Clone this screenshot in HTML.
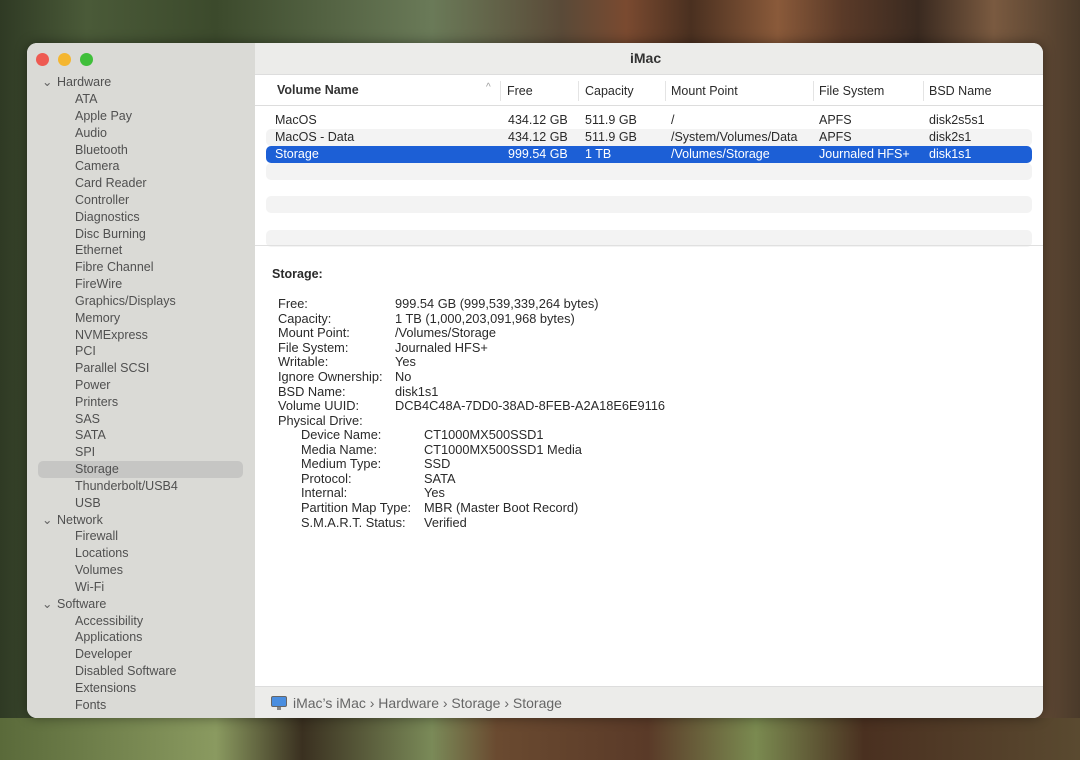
<!DOCTYPE html>
<html><head><meta charset="utf-8"><style>
*{margin:0;padding:0;box-sizing:border-box}
body{width:1080px;height:760px;overflow:hidden;position:relative;font-family:"Liberation Sans",sans-serif;font-size:12.5px;color:#2a2a2a;
background:linear-gradient(90deg,#2f3a24 0%,#4a5a38 8%,#3c4a2c 20%,#6a7a58 40%,#5a4a38 52%,#7a4a30 58%,#4a3020 64%,#8a5a3a 72%,#5a3a28 78%,#3a2a20 85%,#7a5a40 92%,#4a3a2a 100%)}
.t{position:absolute;white-space:nowrap}
#win{position:absolute;left:27px;top:43px;width:1016px;height:675px;border-radius:10px;overflow:hidden;background:#fff;box-shadow:0 0 12px rgba(0,0,0,.4)}
#side{position:absolute;left:0;top:0;width:228px;height:675px;background:#dadad6}
#title{position:absolute;left:228px;top:0;right:0;height:32px;background:#ececea;border-bottom:1px solid #ddd}
#hdr{position:absolute;left:228px;top:32px;right:0;height:31px;background:#fff;border-bottom:1px solid #ddd}
#status{position:absolute;left:228px;top:643px;right:0;height:32px;background:#ececea;border-top:1px solid #ddd}
.dot{position:absolute;top:10px;width:13px;height:13px;border-radius:50%}
.si{position:absolute;left:48px;color:#505050}
.sh{position:absolute;left:30px;color:#505050}
.stripe{position:absolute;left:239px;width:766px;height:17px;background:#f3f3f3;border-radius:5px}
.det{font-size:12.8px}
</style></head><body>
<div style="position:absolute;left:0;top:718px;width:1080px;height:42px;background:linear-gradient(90deg,#5a6a3a,#8a9a60 20%,#3a3020 28%,#7a8a58 40%,#6a4a30 46%,#5a3a28 60%,#7a8a50 70%,#4a3020 80%,#5a4a30)"></div>
<div id="win">
<div id="side">
<div class="dot" style="left:9px;background:#ee5a52"></div>
<div class="dot" style="left:31px;background:#f4b630"></div>
<div class="dot" style="left:53px;background:#3fbf3a"></div>
<div style="position:absolute;left:11px;top:418px;width:205px;height:17px;background:#c6c6c4;border-radius:5px"></div>
<div class="sh" style="top:32px">Hardware</div><div class="t" style="left:15px;top:31px;color:#666">⌄</div>
<div class="si" style="top:49px">ATA</div>
<div class="si" style="top:66px">Apple Pay</div>
<div class="si" style="top:83px">Audio</div>
<div class="si" style="top:100px">Bluetooth</div>
<div class="si" style="top:116px">Camera</div>
<div class="si" style="top:133px">Card Reader</div>
<div class="si" style="top:150px">Controller</div>
<div class="si" style="top:167px">Diagnostics</div>
<div class="si" style="top:184px">Disc Burning</div>
<div class="si" style="top:200px">Ethernet</div>
<div class="si" style="top:217px">Fibre Channel</div>
<div class="si" style="top:234px">FireWire</div>
<div class="si" style="top:251px">Graphics/Displays</div>
<div class="si" style="top:268px">Memory</div>
<div class="si" style="top:285px">NVMExpress</div>
<div class="si" style="top:301px">PCI</div>
<div class="si" style="top:318px">Parallel SCSI</div>
<div class="si" style="top:335px">Power</div>
<div class="si" style="top:352px">Printers</div>
<div class="si" style="top:369px">SAS</div>
<div class="si" style="top:385px">SATA</div>
<div class="si" style="top:402px">SPI</div>
<div class="si" style="top:419px">Storage</div>
<div class="si" style="top:436px">Thunderbolt/USB4</div>
<div class="si" style="top:453px">USB</div>
<div class="sh" style="top:470px">Network</div><div class="t" style="left:15px;top:469px;color:#666">⌄</div>
<div class="si" style="top:486px">Firewall</div>
<div class="si" style="top:503px">Locations</div>
<div class="si" style="top:520px">Volumes</div>
<div class="si" style="top:537px">Wi-Fi</div>
<div class="sh" style="top:554px">Software</div><div class="t" style="left:15px;top:553px;color:#666">⌄</div>
<div class="si" style="top:571px">Accessibility</div>
<div class="si" style="top:587px">Applications</div>
<div class="si" style="top:604px">Developer</div>
<div class="si" style="top:621px">Disabled Software</div>
<div class="si" style="top:638px">Extensions</div>
<div class="si" style="top:655px">Fonts</div>
</div>
<div id="title"><div class="t" style="left:375px;top:7px;font-size:14px;font-weight:bold;color:#333">iMac</div></div>
<div id="hdr">
<div class="t" style="left:22px;top:8px;font-weight:bold;color:#333">Volume Name</div>
<div class="t" style="left:231px;top:7px;color:#999;font-size:10px">^</div>
<div class="t" style="left:252px;top:9px">Free</div>
<div class="t" style="left:330px;top:9px">Capacity</div>
<div class="t" style="left:416px;top:9px">Mount Point</div>
<div class="t" style="left:564px;top:9px">File System</div>
<div class="t" style="left:674px;top:9px">BSD Name</div>
<div style="position:absolute;left:245px;top:6px;width:1px;height:20px;background:#e4e4e4"></div>
<div style="position:absolute;left:323px;top:6px;width:1px;height:20px;background:#e4e4e4"></div>
<div style="position:absolute;left:410px;top:6px;width:1px;height:20px;background:#e4e4e4"></div>
<div style="position:absolute;left:558px;top:6px;width:1px;height:20px;background:#e4e4e4"></div>
<div style="position:absolute;left:668px;top:6px;width:1px;height:20px;background:#e4e4e4"></div>
</div>
<div class="stripe" style="top:86px"></div>
<div class="stripe" style="top:120px"></div>
<div class="stripe" style="top:153px"></div>
<div class="stripe" style="top:187px"></div>
<div style="position:absolute;left:239px;top:103px;width:766px;height:17px;background:#1c5fd6;border-radius:5px"></div>
<div style="position:absolute;left:228px;top:202px;right:0;height:1px;background:#e0e0e0"></div>
<div style="position:absolute;left:0;top:1px;font-size:12.5px">
<div class="t" style="left:248px;top:69px">MacOS</div><div class="t" style="left:481px;top:69px">434.12 GB</div><div class="t" style="left:558px;top:69px">511.9 GB</div><div class="t" style="left:644px;top:69px">/</div><div class="t" style="left:792px;top:69px">APFS</div><div class="t" style="left:902px;top:69px">disk2s5s1</div>
<div class="t" style="left:248px;top:86px">MacOS - Data</div><div class="t" style="left:481px;top:86px">434.12 GB</div><div class="t" style="left:558px;top:86px">511.9 GB</div><div class="t" style="left:644px;top:86px">/System/Volumes/Data</div><div class="t" style="left:792px;top:86px">APFS</div><div class="t" style="left:902px;top:86px">disk2s1</div>
<div style="color:#fff"><div class="t" style="left:248px;top:103px">Storage</div><div class="t" style="left:481px;top:103px">999.54 GB</div><div class="t" style="left:558px;top:103px">1 TB</div><div class="t" style="left:644px;top:103px">/Volumes/Storage</div><div class="t" style="left:792px;top:103px">Journaled HFS+</div><div class="t" style="left:902px;top:103px">disk1s1</div></div>
</div>
<div style="position:absolute;left:245px;top:224px;font-weight:bold">Storage:</div>
<div class="det" style="position:absolute;left:0;top:0;line-height:14.6px">
<div class="t" style="left:251px;top:254px">Free:<br>Capacity:<br>Mount Point:<br>File System:<br>Writable:<br>Ignore Ownership:<br>BSD Name:<br>Volume UUID:<br>Physical Drive:</div>
<div class="t" style="left:368px;top:254px">999.54 GB (999,539,339,264 bytes)<br>1 TB (1,000,203,091,968 bytes)<br>/Volumes/Storage<br>Journaled HFS+<br>Yes<br>No<br>disk1s1<br>DCB4C48A-7DD0-38AD-8FEB-A2A18E6E9116</div>
<div class="t" style="left:274px;top:385px">Device Name:<br>Media Name:<br>Medium Type:<br>Protocol:<br>Internal:<br>Partition Map Type:<br>S.M.A.R.T. Status:</div>
<div class="t" style="left:397px;top:385px">CT1000MX500SSD1<br>CT1000MX500SSD1 Media<br>SSD<br>SATA<br>Yes<br>MBR (Master Boot Record)<br>Verified</div>
</div>
<div id="status">
<svg style="position:absolute;left:16px;top:9px" width="16" height="15" viewBox="0 0 16 15"><rect x="0.5" y="0.5" width="15" height="10" rx="1.5" fill="#4a8ee0" stroke="#666"/><rect x="6" y="11" width="4" height="3" fill="#888"/></svg>
<div class="t" style="left:38px;top:8px;font-size:14px;color:#666">iMac’s iMac › Hardware › Storage › Storage</div>
</div>
</div>
</body></html>
